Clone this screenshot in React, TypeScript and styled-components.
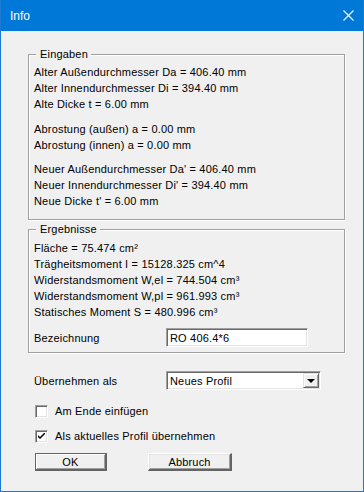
import React from "react";
import styled, { createGlobalStyle } from "styled-components";

const GlobalStyle = createGlobalStyle`
  html, body {
    margin: 0;
    padding: 0;
    background: #f0f0f0;
  }
`;

const Window = styled.div`
  width: 364px;
  height: 492px;
  box-sizing: border-box;
  border: 1px solid #1c7ad2;
  border-top: none;
  background: #f0f0f0;
  display: flex;
  flex-direction: column;
  font-family: "Liberation Sans", Arial, sans-serif;
  font-size: 11px;
  letter-spacing: 0.18px;
  color: #000;
`;

const TitleBar = styled.div`
  height: 31px;
  background: #0078d7;
  display: flex;
  align-items: center;
  justify-content: space-between;
  padding: 0 9px 0 9px;
  color: #fff;
  font-size: 12px;
  letter-spacing: 0;
`;

const CloseIcon = () => (
  <svg width="11" height="11" viewBox="0 0 11 11">
    <path d="M0.5 0.5 L10.5 10.5 M10.5 0.5 L0.5 10.5" stroke="#fff" strokeWidth="1.1" />
  </svg>
);

const Body = styled.div`
  flex: 1;
  padding: 23px 18px 0 27px;
  display: flex;
  flex-direction: column;
`;

const Group = styled.div<{ $top?: number; $pt: number; $pb: number }>`
  position: relative;
  width: 317px;
  box-sizing: border-box;
  margin-top: ${(p) => p.$top ?? 0}px;
  border: 1px solid #a0a0a0;
  box-shadow: inset 1px 1px 0 #fff, 1px 1px 0 #fff;
  padding: ${(p) => p.$pt}px 0 ${(p) => p.$pb}px 5px;
  display: flex;
  flex-direction: column;
`;

const Legend = styled.span`
  position: absolute;
  top: -9px;
  left: 7px;
  padding: 0 3px 0 4px;
  background: #f0f0f0;
  line-height: 16px;
`;

const Line = styled.div`
  height: 16px;
  line-height: 16px;
  white-space: nowrap;
`;

const Spacer = styled.div<{ $h: number }>`
  height: ${(p) => p.$h}px;
`;

const FieldRow = styled.div<{ $top: number; $indent?: number }>`
  display: flex;
  align-items: center;
  height: 19px;
  margin-top: ${(p) => p.$top}px;
  padding-left: ${(p) => p.$indent ?? 0}px;
`;

const Label = styled.span`
  width: 132px;
  flex: none;
`;

const Sunken = styled.div<{ $w: number }>`
  width: ${(p) => p.$w}px;
  height: 19px;
  box-sizing: border-box;
  background: #fff;
  border-top: 1px solid #a0a0a0;
  border-left: 1px solid #a0a0a0;
  border-right: 1px solid #fff;
  border-bottom: 1px solid #fff;
  box-shadow: inset 1px 1px 0 #696969, inset -1px -1px 0 #e3e3e3;
  display: flex;
  align-items: center;
  padding-left: 3px;
  position: relative;
`;

const ArrowButton = styled.div`
  position: absolute;
  right: 1px;
  top: 1px;
  bottom: 1px;
  width: 16px;
  box-sizing: border-box;
  background: #f0f0f0;
  border-top: 1px solid #e3e3e3;
  border-left: 1px solid #e3e3e3;
  border-right: 1px solid #696969;
  border-bottom: 1px solid #696969;
  box-shadow: inset 1px 1px 0 #fff, inset -1px -1px 0 #a0a0a0;
  display: flex;
  align-items: center;
  justify-content: center;
`;

const Arrow = styled.div`
  width: 0;
  height: 0;
  border-left: 4px solid transparent;
  border-right: 4px solid transparent;
  border-top: 4px solid #000;
`;

const CheckRow = styled.div<{ $top: number }>`
  display: flex;
  align-items: center;
  height: 16px;
  margin-top: ${(p) => p.$top}px;
  padding-left: 7px;
  gap: 7px;
`;

const Box = styled.div`
  width: 13px;
  height: 13px;
  box-sizing: border-box;
  background: #fff;
  border-top: 1px solid #a0a0a0;
  border-left: 1px solid #a0a0a0;
  border-right: 1px solid #fff;
  border-bottom: 1px solid #fff;
  box-shadow: inset 1px 1px 0 #696969, inset -1px -1px 0 #e3e3e3;
  display: flex;
  align-items: center;
  justify-content: center;
`;

const Check = () => (
  <svg width="7" height="7" viewBox="0 0 7 7">
    <path d="M0 2 L0 4 L2 6 L7 1 L7 -1 L2 4 Z" fill="#000" />
  </svg>
);

const ButtonRow = styled.div`
  display: flex;
  margin-top: 9px;
  padding-left: 7px;
  gap: 41px;
`;

const Button = styled.div<{ $default?: boolean }>`
  width: ${(p) => (p.$default ? 72 : 84)}px;
  height: 18px;
  box-sizing: border-box;
  background: #f0f0f0;
  border-top: 1px solid ${(p) => (p.$default ? "#646464" : "#fff")};
  border-left: 1px solid ${(p) => (p.$default ? "#646464" : "#fff")};
  border-right: 2px solid #646464;
  border-bottom: 2px solid #646464;
  box-shadow: inset 1px 1px 0 ${(p) => (p.$default ? "#fff" : "#e3e3e3")}, inset -1px -1px 0 #a0a0a0;
  display: flex;
  align-items: center;
  justify-content: center;
`;

const CheckOption = ({ checked, children, top }: { checked?: boolean; children: React.ReactNode; top: number }) => (
  <CheckRow $top={top}>
    <Box>{checked && <Check />}</Box>
    <span>{children}</span>
  </CheckRow>
);

export default function App() {
  return (
    <>
      <GlobalStyle />
      <Window>
        <TitleBar>
          <span>Info</span>
          <CloseIcon />
        </TitleBar>
        <Body>
          <Group $pt={9} $pb={10}>
            <Legend>Eingaben</Legend>
            <Line>Alter Außendurchmesser Da = 406.40 mm</Line>
            <Line>Alter Innendurchmesser Di = 394.40 mm</Line>
            <Line>Alte Dicke t = 6.00 mm</Line>
            <Spacer $h={9} />
            <Line>Abrostung (außen) a = 0.00 mm</Line>
            <Line>Abrostung (innen) a = 0.00 mm</Line>
            <Spacer $h={8} />
            <Line>Neuer Außendurchmesser Da' = 406.40 mm</Line>
            <Line>Neuer Innendurchmesser Di' = 394.40 mm</Line>
            <Line>Neue Dicke t' = 6.00 mm</Line>
          </Group>
          <Group $top={9} $pt={10} $pb={5}>
            <Legend>Ergebnisse</Legend>
            <Line>Fläche = 75.474 cm²</Line>
            <Line>Trägheitsmoment I = 15128.325 cm^4</Line>
            <Line>Widerstandsmoment W,el = 744.504 cm³</Line>
            <Line>Widerstandsmoment W,pl = 961.993 cm³</Line>
            <Line>Statisches Moment S = 480.996 cm³</Line>
            <FieldRow $top={8}>
              <Label>Bezeichnung</Label>
              <Sunken $w={142}>RO 406.4*6</Sunken>
            </FieldRow>
          </Group>
          <FieldRow $top={18} $indent={6}>
            <Label>Übernehmen als</Label>
            <Sunken $w={155}>
              Neues Profil
              <ArrowButton>
                <Arrow />
              </ArrowButton>
            </Sunken>
          </FieldRow>
          <CheckOption top={13}>Am Ende einfügen</CheckOption>
          <CheckOption top={9} checked>
            Als aktuelles Profil übernehmen
          </CheckOption>
          <ButtonRow>
            <Button $default>OK</Button>
            <Button>Abbruch</Button>
          </ButtonRow>
        </Body>
      </Window>
    </>
  );
}
